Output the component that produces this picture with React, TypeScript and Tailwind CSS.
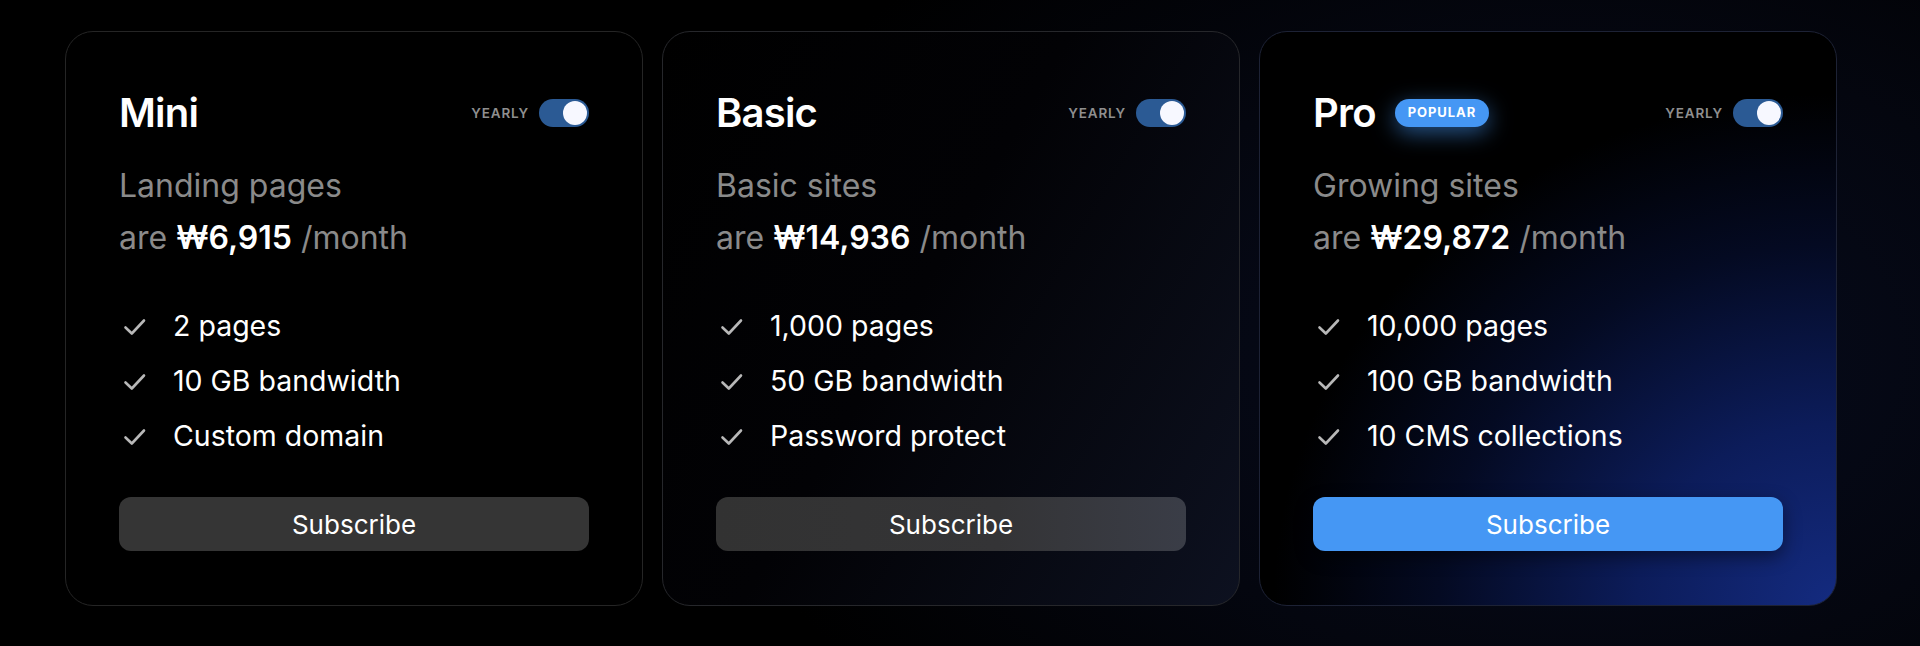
import React from "react";

type Plan = {
  name: string;
  popular?: boolean;
  subtitle: string;
  price: string;
  features: string[];
  variant: "mini" | "basic" | "pro";
};

const plans: Plan[] = [
  { name: "Mini", subtitle: "Landing pages", price: "₩6,915", features: ["2 pages", "10 GB bandwidth", "Custom domain"], variant: "mini" },
  { name: "Basic", subtitle: "Basic sites", price: "₩14,936", features: ["1,000 pages", "50 GB bandwidth", "Password protect"], variant: "basic" },
  { name: "Pro", popular: true, subtitle: "Growing sites", price: "₩29,872", features: ["10,000 pages", "100 GB bandwidth", "10 CMS collections"], variant: "pro" },
];

function Check() {
  return (
    <svg width="24" height="20" viewBox="0 0 24 20" fill="none" className="shrink-0">
      <path d="M2.5 10.5 L8.8 16.5 L21 3.5" stroke="#b8b8b8" strokeWidth="2.6" strokeLinecap="round" strokeLinejoin="round" />
    </svg>
  );
}

function Toggle() {
  return (
    <div className="flex items-center gap-[10px]">
      <span className="text-[13.5px] font-semibold tracking-[0.06em] text-[#8f8f8f]">YEARLY</span>
      <div className="flex h-[28px] w-[50px] items-center justify-end rounded-full bg-[#2b5a94] px-[2px]">
        <div className="h-[24px] w-[24px] rounded-full bg-[#f7f8ff]" />
      </div>
    </div>
  );
}

function Card({ plan }: { plan: Plan }) {
  const cardBg =
    plan.variant === "mini"
      ? "bg-black border-[#252525]"
      : plan.variant === "basic"
      ? "bg-[linear-gradient(120deg,#000000_0%,#020205_45%,#0d1120_100%)] border-[#26272b]"
      : "bg-[radial-gradient(ellipse_115%_105%_at_100%_100%,#142b80_0%,#0c1c5a_30%,#040a22_60%,#000000_85%)] border-[#1d2235]";
  const btn =
    plan.variant === "mini"
      ? "bg-[#353535]"
      : plan.variant === "basic"
      ? "bg-[linear-gradient(90deg,#323232_0%,#343436_60%,#3a3d47_100%)]"
      : "bg-[#4597f4] shadow-[0_6px_18px_rgba(0,0,0,0.45)]";
  return (
    <div className={`flex w-[578px] flex-col rounded-[28px] border px-[53px] pt-[53px] pb-[54px] ${cardBg}`}>
      <div className="flex h-[56px] items-center justify-between">
        <div className="flex items-center gap-[19px]">
          <span className="text-[40px] font-semibold leading-none tracking-[-0.02em] text-white">{plan.name}</span>
          {plan.popular && (
            <span className="flex h-[28px] items-center rounded-full bg-[#4597f4] px-[13px] text-[13px] font-bold tracking-[0.07em] text-white shadow-[0_6px_22px_rgba(69,151,244,0.55)]">
              POPULAR
            </span>
          )}
        </div>
        <Toggle />
      </div>
      <div className="mt-[19px] text-[32px] leading-[52px] text-[#8a8a8a]">{plan.subtitle}</div>
      <div className="text-[32px] leading-[52px] text-[#8a8a8a]">
        are <span className="font-semibold text-white">{plan.price}</span> /month
      </div>
      <ul className="mt-[35px] flex flex-col">
        {plan.features.map((f) => (
          <li key={f} className="flex h-[55px] items-center gap-[26px] pl-[4px] text-[28.5px] text-white">
            <Check />
            <span>{f}</span>
          </li>
        ))}
      </ul>
      <button className={`mt-[33px] h-[54px] w-full rounded-[12px] text-[26px] font-normal text-white ${btn}`}>
        Subscribe
      </button>
    </div>
  );
}

export default function App() {
  return (
    <div
      className="h-[646px] w-[1920px] bg-[radial-gradient(ellipse_45%_90%_at_82%_55%,#070c1f_0%,#04060f_55%,#000000_100%)] pl-[65px] pt-[31px]"
      style={{ fontFamily: "Inter, 'Noto Sans', sans-serif" }}
    >
      <div className="flex gap-[19px]">
        {plans.map((p) => (
          <Card key={p.name} plan={p} />
        ))}
      </div>
    </div>
  );
}
